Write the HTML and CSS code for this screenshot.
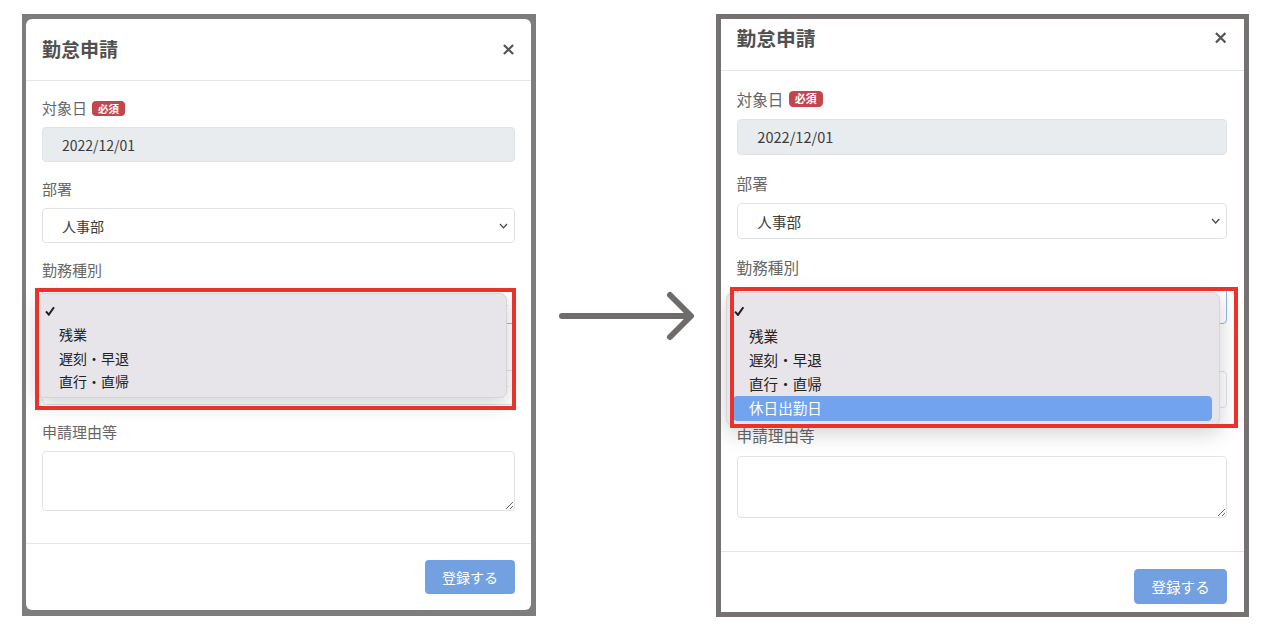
FILE: index.html
```html
<!DOCTYPE html>
<html lang="ja">
<head>
    <meta charset="UTF-8">
    <title>勤怠申請</title>
    <link rel="stylesheet" href="styles.css">
</head>
<body>
<div class="page">
    <!-- before -->
    <div class="shot shot-before">
        <div class="modal">
            <div class="modal-header">
                <h2 class="modal-title">勤怠申請</h2>
                <svg class="close" viewBox="0 0 12 12"><path d="M1 1L11 11M11 1L1 11"/></svg>
            </div>
            <div class="modal-body">
                <div class="field">
                    <div class="label">対象日 <span class="badge">必須</span></div>
                    <div class="control control-disabled">2022/12/01</div>
                </div>
                <div class="field">
                    <div class="label">部署</div>
                    <div class="control control-select">
                        <span>人事部</span>
                        <svg class="chevron" viewBox="0 0 9 6"><polyline points="1,1 4.5,4.8 8,1"/></svg>
                    </div>
                </div>
                <div class="field">
                    <div class="label">勤務種別</div>
                    <div class="select-wrap">
                        <div class="control control-select control-focus">
                            <span></span>
                            <svg class="chevron" viewBox="0 0 9 6"><polyline points="1,1 4.5,4.8 8,1"/></svg>
                        </div>
                        <div class="menu menu-before">
                            <div class="opt opt-checked">
                                <svg class="check" viewBox="0 0 10 10"><polyline points="1,5.4 3.8,8.6 9,1.2"/></svg>
                            </div>
                            <div class="opt">残業</div>
                            <div class="opt">遅刻・早退</div>
                            <div class="opt">直行・直帰</div>
                        </div>
                        <div class="mark mark-before"></div>
                    </div>
                </div>
                <div class="field">
                    <div class="label">&nbsp;</div>
                    <div class="control control-select">
                        <span></span>
                        <svg class="chevron" viewBox="0 0 9 6"><polyline points="1,1 4.5,4.8 8,1"/></svg>
                    </div>
                </div>
                <div class="field">
                    <div class="label">申請理由等</div>
                    <textarea class="textarea"></textarea>
                </div>
            </div>
            <div class="modal-footer">
                <button class="btn">登録する</button>
            </div>
        </div>
    </div>

    <div class="arrow">
        <svg viewBox="0 0 180 60" width="180" height="60">
            <line x1="26" y1="30" x2="152" y2="30"/>
            <polyline points="134,9 155,30 134,51"/>
        </svg>
    </div>

    <!-- after -->
    <div class="shot shot-after">
        <div class="modal">
            <div class="modal-header">
                <h2 class="modal-title">勤怠申請</h2>
                <svg class="close" viewBox="0 0 12 12"><path d="M1 1L11 11M11 1L1 11"/></svg>
            </div>
            <div class="modal-body">
                <div class="field">
                    <div class="label">対象日 <span class="badge">必須</span></div>
                    <div class="control control-disabled">2022/12/01</div>
                </div>
                <div class="field">
                    <div class="label">部署</div>
                    <div class="control control-select">
                        <span>人事部</span>
                        <svg class="chevron" viewBox="0 0 9 6"><polyline points="1,1 4.5,4.8 8,1"/></svg>
                    </div>
                </div>
                <div class="field">
                    <div class="label">勤務種別</div>
                    <div class="select-wrap">
                        <div class="control control-select control-focus">
                            <span></span>
                            <svg class="chevron" viewBox="0 0 9 6"><polyline points="1,1 4.5,4.8 8,1"/></svg>
                        </div>
                        <div class="menu menu-after">
                            <div class="opt opt-checked">
                                <svg class="check" viewBox="0 0 10 10"><polyline points="1,5.4 3.8,8.6 9,1.2"/></svg>
                            </div>
                            <div class="opt">残業</div>
                            <div class="opt">遅刻・早退</div>
                            <div class="opt">直行・直帰</div>
                            <div class="opt opt-active">休日出勤日</div>
                        </div>
                        <div class="mark mark-after"></div>
                    </div>
                </div>
                <div class="field">
                    <div class="label">&nbsp;</div>
                    <div class="control control-select">
                        <span></span>
                        <svg class="chevron" viewBox="0 0 9 6"><polyline points="1,1 4.5,4.8 8,1"/></svg>
                    </div>
                </div>
                <div class="field">
                    <div class="label">申請理由等</div>
                    <textarea class="textarea"></textarea>
                </div>
            </div>
            <div class="modal-footer">
                <button class="btn">登録する</button>
            </div>
        </div>
    </div>
</div>
</body>
</html>
```

FILE: styles.css
```css
* { box-sizing: border-box; }
body {
    margin: 0;
    background: #fff;
    font-family: "Noto Sans CJK JP", "Noto Sans", sans-serif;
    color: #333;
}
.page {
    display: flex;
    align-items: flex-start;
    padding: 14px 0 0 22px;
}

/* screenshot frames (grey backdrop around the modal) */
.shot-before {
    width: 514px;
    background: #7d7d7d;
    padding: 5px 5px 6px 4px;
}
.shot-after {
    width: 533px;
    height: 603px;
    border: 5px solid #767271;
    background: #7d7d7d;
    overflow: hidden;
}
.shot-after .modal {
    zoom: 1.04;
    margin-top: -12px;
    margin-left: -1px;
}

.modal {
    background: #fff;
    border-radius: 6px;
}
.modal-header {
    display: flex;
    justify-content: space-between;
    align-items: center;
    padding: 16px 16px 17px;
    border-bottom: 1px solid #e3e5e8;
}
.modal-title {
    margin: 0;
    font-size: 19px;
    line-height: 28px;
    font-weight: 700;
    color: #505050;
}
.close {
    width: 11px;
    height: 11px;
    margin-right: 1px;
}
.close path {
    stroke: #555;
    stroke-width: 2.4;
    fill: none;
}
.modal-body {
    padding: 16px;
}
.field {
    margin-bottom: 16px;
}
.label {
    display: flex;
    align-items: center;
    gap: 5px;
    font-size: 15px;
    line-height: 22px;
    color: #666;
    margin-bottom: 8px;
}
.badge {
    background: #c2464b;
    color: #fff;
    font-size: 10.5px;
    font-weight: 700;
    line-height: 15px;
    padding: 0 6px;
    border-radius: 4px;
}
.control {
    display: flex;
    align-items: center;
    height: 35px;
    padding: 0 6px 0 19px;
    border: 1px solid #dfe3e7;
    border-radius: 4px;
    font-size: 14px;
    color: #3b3b3b;
    background: #fff;
}
.control-disabled {
    background: #e9ecef;
}
.control-select {
    justify-content: space-between;
}
.control-focus {
    border-color: #8db6f3;
}
.chevron {
    width: 9px;
    height: 6px;
}
.chevron polyline {
    fill: none;
    stroke: #444;
    stroke-width: 1.2;
}
.textarea {
    display: block;
    width: 100%;
    height: 60px;
    border: 1px solid #dfe3e7;
    border-radius: 4px;
    font-family: inherit;
}
.modal-footer {
    display: flex;
    justify-content: flex-end;
    padding: 16px;
    border-top: 1px solid #e3e5e8;
}
.btn {
    height: 34px;
    padding: 0 17px;
    border: none;
    border-radius: 4px;
    background: #72a0e0;
    color: #fff;
    font-family: inherit;
    font-size: 14px;
}

/* open dropdown */
.select-wrap {
    position: relative;
}
.menu {
    position: absolute;
    z-index: 2;
    padding: 6px 7px 4px 6px;
    background: #e7e5e9;
    border: 1px solid #d6d4d9;
    border-radius: 7px;
    box-shadow: 0 6px 20px rgba(0, 0, 0, .18);
}
.menu-before {
    left: -5px;
    top: 4px;
    width: 470px;
}
.menu-after {
    left: -10px;
    top: 5px;
    width: 475px;
}
.opt {
    position: relative;
    height: 23.3px;
    line-height: 23.3px;
    padding-left: 15px;
    font-size: 14px;
    color: #222;
    border-radius: 4px;
}
.check {
    position: absolute;
    left: 1px;
    top: 6px;
    width: 10px;
    height: 10px;
}
.check polyline {
    fill: none;
    stroke: #1f1f1f;
    stroke-width: 2;
}
.opt-active {
    background: #72a3ef;
    color: #fff;
}

/* red highlight annotation */
.mark {
    position: absolute;
    z-index: 3;
    border: 4px solid #e8322b;
}
.mark-before {
    left: -7px;
    top: -1px;
    width: 481px;
    height: 122px;
}
.mark-after {
    left: -6px;
    top: 0;
    width: 488px;
    height: 135px;
}

.arrow {
    width: 180px;
    padding-top: 272px;
}
.arrow svg line,
.arrow svg polyline {
    fill: none;
    stroke: #6f6b6b;
    stroke-width: 6;
    stroke-linecap: round;
    stroke-linejoin: round;
}
```
